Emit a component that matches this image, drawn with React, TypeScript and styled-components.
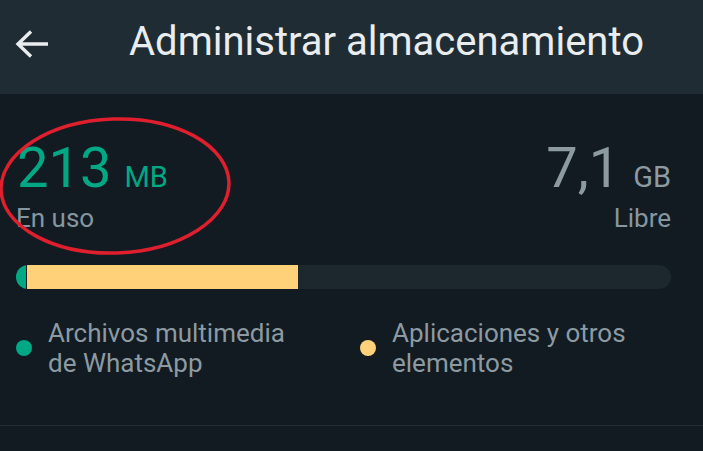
import styled, { createGlobalStyle } from "styled-components";

const GlobalStyle = createGlobalStyle`
  html, body {
    margin: 0;
    padding: 0;
    background: #111b21;
  }
  body {
    font-family: Roboto, "Noto Sans", sans-serif;
  }
`;

export default function App() {
  return (
    <>
      <GlobalStyle />
      <Page>
        <Header>
          <BackButton aria-label="Atrás">
            <svg width="34" height="34" viewBox="0 0 34 34">
              <path
                d="M33 16H4M16 3.5L3 16l13 12.5"
                fill="none"
                stroke="#e9edef"
                strokeWidth="3.4"
              />
            </svg>
          </BackButton>
          <Title>Administrar almacenamiento</Title>
        </Header>

        <Body>
          <Stats>
            <Stat>
              <Value $color="#00a884">
                213<Unit>MB</Unit>
              </Value>
              <Label>En uso</Label>
            </Stat>
            <Stat $right>
              <Value $color="#8d9aa2">
                7,1<Unit>GB</Unit>
              </Value>
              <Label>Libre</Label>
            </Stat>
          </Stats>

          <Track>
            <Segment $color="#00a884" style={{ width: 10 }} />
            <Gap />
            <Segment $color="#ffd279" style={{ width: 271 }} />
          </Track>

          <Legend>
            <LegendItem $width={344}>
              <Dot $color="#00a884" />
              <LegendText>
                Archivos multimedia
                <br />
                de WhatsApp
              </LegendText>
            </LegendItem>
            <LegendItem>
              <Dot $color="#ffd279" />
              <LegendText>
                Aplicaciones y otros
                <br />
                elementos
              </LegendText>
            </LegendItem>
          </Legend>

          <Divider />

          <Annotation viewBox="0 0 240 180" width="240" height="180">
            <ellipse
              cx="115"
              cy="92"
              rx="114"
              ry="67"
              fill="none"
              stroke="#df1f2d"
              strokeWidth="3.5"
              transform="rotate(-2 115 92)"
            />
          </Annotation>
        </Body>
      </Page>
    </>
  );
}

const Page = styled.div`
  width: 703px;
  height: 451px;
  overflow: hidden;
  background: #111b21;
`;

const Header = styled.div`
  display: flex;
  align-items: center;
  height: 94px;
  box-sizing: border-box;
  padding: 0 0 10px 15px;
  background: #202c33;
`;

const BackButton = styled.div`
  display: flex;
  width: 34px;
  height: 34px;
  margin: 6px 80px 0 0;
`;

const Title = styled.div`
  color: #e9edef;
  font-size: 40px;
  line-height: 46px;
`;

const Body = styled.div`
  position: relative;
  padding: 46px 32px 0 16px;
`;

const Stats = styled.div`
  display: flex;
  justify-content: space-between;
`;

const Stat = styled.div<{ $right?: boolean }>`
  display: flex;
  flex-direction: column;
  align-items: ${(p) => (p.$right ? "flex-end" : "flex-start")};
`;

const Value = styled.div<{ $color: string }>`
  color: ${(p) => p.$color};
  font-size: 56px;
  line-height: 56px;
  height: 56px;
  padding-left: 1px;
  display: flex;
  align-items: baseline;
  gap: 13px;
`;

const Unit = styled.span`
  font-size: 29px;
  line-height: 29px;
`;

const Label = styled.div`
  margin-top: 7px;
  color: #8696a0;
  font-size: 26px;
  line-height: 30px;
`;

const Track = styled.div`
  display: flex;
  height: 24px;
  margin-top: 32px;
  border-radius: 12px;
  overflow: hidden;
  background: #1d282e;
`;

const Segment = styled.div<{ $color: string }>`
  height: 100%;
  background: ${(p) => p.$color};
`;

const Gap = styled.div`
  width: 1px;
  background: #111b21;
`;

const Legend = styled.div`
  display: flex;
  margin-top: 29px;
`;

const LegendItem = styled.div<{ $width?: number }>`
  display: flex;
  align-items: center;
  gap: 16px;
  width: ${(p) => (p.$width ? `${p.$width}px` : "auto")};
`;

const Dot = styled.span<{ $color: string }>`
  flex: none;
  width: 16px;
  height: 16px;
  border-radius: 50%;
  background: ${(p) => p.$color};
`;

const LegendText = styled.div`
  color: #8d9aa2;
  font-size: 26px;
  line-height: 30px;
`;

const Divider = styled.div`
  height: 1px;
  margin: 47px -32px 0 -16px;
  background: #222d34;
`;

const Annotation = styled.svg`
  position: absolute;
  left: 0;
  top: 0;
  pointer-events: none;
`;
